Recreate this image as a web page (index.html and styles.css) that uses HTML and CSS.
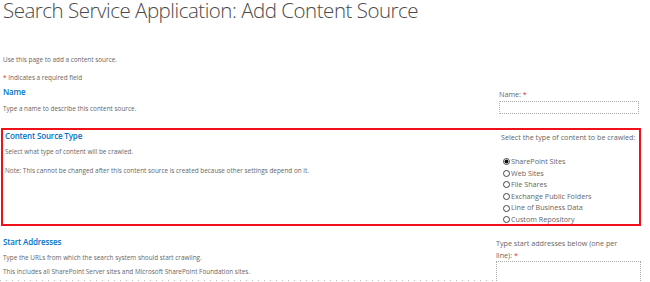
FILE: index.html
```html
<!DOCTYPE html>
<html lang="en">
<head>
    <meta charset="UTF-8">
    <title>Search Service Application: Add Content Source</title>
    <link rel="stylesheet" href="styles.css">
</head>
<body>
    <h1 class="page-title">Search Service Application: Add Content Source</h1>

    <p class="intro">Use this page to add a content source.</p>
    <p class="intro intro-req"><span class="req">*</span> Indicates a required field</p>

    <div class="section section-name">
        <div class="section-desc">
            <h2>Name</h2>
            <p>Type a name to describe this content source.</p>
        </div>
        <div class="section-field">
            <label class="field-label">Name: <span class="req">*</span></label>
            <input type="text" class="text-box">
        </div>
    </div>

    <div class="section section-type">
        <div class="section-desc">
            <h2>Content Source Type</h2>
            <p>Select what type of content will be crawled.</p>
            <p class="note">Note: This cannot be changed after this content source is created because other settings depend on it.</p>
        </div>
        <div class="section-field">
            <div class="field-label">Select the type of content to be crawled:</div>
            <ul class="radio-list">
                <li><label><input type="radio" name="type" checked>SharePoint Sites</label></li>
                <li><label><input type="radio" name="type">Web Sites</label></li>
                <li><label><input type="radio" name="type">File Shares</label></li>
                <li><label><input type="radio" name="type">Exchange Public Folders</label></li>
                <li><label><input type="radio" name="type">Line of Business Data</label></li>
                <li><label><input type="radio" name="type">Custom Repository</label></li>
            </ul>
        </div>
    </div>

    <div class="section section-start">
        <div class="section-desc">
            <h2>Start Addresses</h2>
            <p>Type the URLs from which the search system should start crawling.</p>
            <p>This includes all SharePoint Server sites and Microsoft SharePoint Foundation sites.</p>
        </div>
        <div class="section-field">
            <label class="field-label">Type start addresses below (one per line): <span class="req">*</span></label>
            <textarea class="text-area"></textarea>
        </div>
    </div>
</body>
</html>
```

FILE: styles.css
```css
body {
    margin: 0;
    padding: 0 0 0 3px;
    font-family: "Open Sans", "Noto Sans", sans-serif;
    color: #666;
    background: #fff;
    overflow: hidden;
}
p {
    margin: 0;
    font-size: 6.4px;
    line-height: 10px;
}
h2 {
    margin: 0;
    font-size: 8px;
    line-height: 12px;
    font-weight: 600;
    color: #0072c6;
    letter-spacing: -0.15px;
}
.page-title {
    margin: 0;
    font-size: 20.5px;
    line-height: 20px;
    font-weight: 300;
    color: #4a4a4a;
    letter-spacing: -0.48px;
}
.intro {
    margin-top: 35px;
}
.intro-req {
    margin-top: 8px;
}
.req {
    color: #e03030;
}
.section {
    display: flex;
}
.section-desc {
    width: 496px;
    flex: none;
}
.section-field {
    flex: 1;
    font-size: 7.2px;
    line-height: 10px;
}
.field-label {
    display: block;
}
.section-name {
    margin-top: 3px;
}
.section-name .section-desc p {
    margin-top: 6px;
}
.section-name .section-field {
    padding-top: 3px;
}
.text-box {
    display: block;
    box-sizing: border-box;
    width: 140px;
    height: 13px;
    margin: 2px 0 0;
    padding: 0;
    border: 1px dotted #aaa;
    border-left-color: #e6a0d0;
}
.section-type {
    width: 634px;
    height: 94px;
    margin: 14px 0 0 -2px;
    padding: 0 0 0 2px;
    border: 2px solid #f0101a;
}
.section-type .section-desc p {
    margin-top: 5px;
}
.section-type .section-desc .note {
    margin-top: 9px;
}
.section-type .section-field {
    padding-top: 2px;
}
.radio-list {
    list-style: none;
    margin: 14px 0 0 2px;
    padding: 0;
}
.radio-list li {
    height: 11.6px;
    line-height: 11.6px;
}
.radio-list label {
    display: flex;
    align-items: center;
}
.radio-list input {
    appearance: none;
    -webkit-appearance: none;
    box-sizing: border-box;
    width: 7px;
    height: 7px;
    margin: 0 1px 0 0;
    border: 1px solid #444;
    border-radius: 50%;
    background: #fff;
}
.radio-list input:checked {
    background: radial-gradient(circle, #111 0 1.8px, #fff 2.2px);
}
.section-start {
    margin-top: 10px;
}
.section-start .section-desc {
    margin-left: -3px;
    padding: 0 0 4px 3px;
    width: 493px;
    height: 41px;
    background: linear-gradient(to right, #bbb 1px, transparent 1px) repeat-x left bottom / 6px 1px;
}
.section-start .section-desc p {
    margin-top: 5px;
}
.section-start .section-desc p + p {
    margin-top: 4px;
}
.section-start .section-field {
    padding-top: 1px;
    line-height: 12px;
}
.section-start .field-label {
    width: 125px;
}
.text-area {
    display: block;
    box-sizing: border-box;
    width: 145px;
    height: 22px;
    margin: 0;
    padding: 0;
    border: 1px dotted #aaa;
    border-bottom: 0;
    resize: none;
}
```
